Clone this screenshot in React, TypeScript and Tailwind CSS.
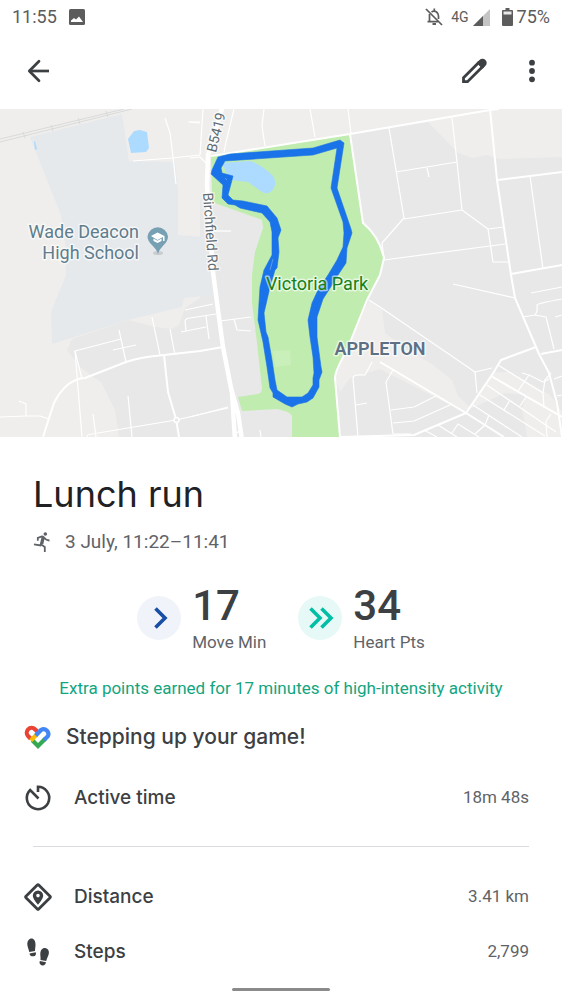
import type { ReactNode } from 'react';

const MINOR_ROADS = [
  'M165 118 170 133 173 157 176 184',
  'M133 161 172 158 200 155',
  'M188 122 200 123',
  'M190 122 200 122M190 158 200 157 207 164',
  'M203 109 200 155',
  'M234 109 226 142 224 152',
  'M264 109 262 126 265 146',
  'M310 109 315 137',
  'M348 109 351 134',
  'M210 231 231 231',
  'M82 437 75 351 121 339',
  'M75 351 82 379',
  'M119 330 126 362',
  'M113 350 136 345',
  'M152 317 160 355',
  'M170 329 175 355',
  'M185 310 213 304',
  'M186 331 185 321Q186 318 190 318L216 314',
  'M181 332 206 327M206 316 209 339',
  'M220 321 251 317M234 319 237 330 251 331',
  'M19 401 26 404 26 416',
  'M0 417 26 416 40 416 49 419',
  'M128 396 132 437',
  'M93 414 96 437',
  'M87 437Q87 434 92 434L176 420 228 408',
  'M190 417 228 407',
  'M237 433 239 431M261 437 260 430',
  'M389 128 404 218 382 243 384 259',
  'M452 118 457 162 462 210 404 219',
  'M396 172 457 162M427 168 429 177',
  'M462 210 488 229 493 262 509 262',
  'M488 229 504 227',
  'M384 260 505 244',
  'M530 176 543 269',
  'M369 300 380 307 475 372 492 368',
  'M475 372 477 393',
  'M453 284 515 298',
  'M531 293 562 287',
  'M523 317 535 315Q538 312 537 305Q539 303 562 299',
  'M535 315 546 317 554 349M555 317 562 315',
  'M372 362 365 375Q353 374 353 378L358 437M356 405 367 403',
  'M393 370 386 382 393 434 411 434',
  'M391 410 414 407 436 396',
  'M393 423 414 421 450 405',
  'M498 365 543 393 544 408',
  'M543 393 545 380 551 373',
  'M522 373 529 375 543 382 549 379',
  'M529 375 518 391M526 397 520 406',
  'M487 385 556 432',
  'M480 395 545 436M473 405 522 437',
  'M510 400 504 410M489 415 485 425 475 434',
  'M424 430 437 437M438 425 457 437M452 433 458 424 479 437',
  'M554 379 562 376M557 396 562 395',
  'M551 414 546 421 547 437',
];

const MAIN_ROADS = [
  'M43 437 50 415 54 403Q66 379 85 378L126 362Q140 357 164 355L200 351 223 347',
  'M164 355 168 392 176 419 179 437',
  'M211 156 350 134 490 110 499 109',
  'M350 134 363 223Q379 236 384 258L380 275 367 300 347 350Q335 371 335 378L340 437',
  'M490 109 497 180 511 275 515 298 539 354 549 373 557 403 562 437',
  'M498 180 562 172',
  'M511 274 562 265',
  'M536 347 501 360 492 375 466 413',
  'M541 354 562 350',
  'M380 362 466 413 504 437',
  'M466 413 414 435 340 437',
  'M491 376 562 417',
];

// Outer edge first, then the inner edge, filled with the even-odd rule.
const ROUTE =
  'M218 157 230 154 313 148 340 140 344 143 337 188 351 229 352 233 347 248 346 263 338 275 332 285 323 299 317 317 317 337 321 367 322 372 319 380 319 387 313 398 307 402 298 404 292 407 285 404 273 397 273 393 270 388 267 367 263 342 261 333 258 320 259 303 260 287 264 270 272 255 272 232 270 222 262 213 240 208 235 205 228 204 222 198 223 185 211 174 212 170Z' +
  'M225 161 313 155 337 148 331 188 343 222 344 233 343 247 337 260 328 275 318 290 312 303 308 320 310 337 313 357 314 373 313 378 313 385 308 393 302 397 287 397 277 390 275 380 272 360 268 337 266 332 264 313 270 287 275 270 277 268 279 252 278 238 281 230 277 218 267 206 243 201 233 200 228 195 232 180 233 176 222 173 221 168Z';

function RouteMap() {
  return (
    <svg viewBox="0 109 562 328" className="block w-full font-[Roboto,sans-serif]" role="img" aria-label="Route map">
      <rect y="109" width="562" height="328" fill="#efeeec" />
      <g fill="#e8e8e8">
        <path d="M67 350 72 339 128 320 155 327 172 329 179 325 185 308 200 298 200 200 212 195 300 240 300 437 119 437 115 410 101 382 92 376 80 367Z" />
        <path d="M350 134 428 122 458 153 472 158 487 155 500 159 562 157 562 437 330 437 350 250Z" />
      </g>
      <g fill="#efeeec">
        <path d="M369 300 382 309 385 333 408 350 432 364 452 380 458 396 470 407 464 412 380 369 350 378 340 392 335 378 345 352Z" />
        <path d="M492 372 510 372 550 395 562 412 562 437 527 437 522 408 527 395 505 393 470 409 478 393Z" />
      </g>
      <path
        d="M30 137 122 114 129 161 175 162 178 190 178 235 204 237 213 295 184 298 182 307 128 320 52 344 51 312 66 275 66 250 61 215Z"
        fill="#e5e9ec"
      />
      <g fill="#acdbff">
        <path d="M128 139 134 131 140 130 147 132 149 148 146 152 131 153Z" />
        <path d="M34 142 35 141 37 149 35 150Z" />
      </g>
      <path d="M0 139 124 109M0 142 132 109" fill="none" stroke="#d8dada" strokeWidth="1" />
      <path d="M23 132 25 138M51 125 53 131M78 118 80 124M106 111 108 117" stroke="#d8dada" />
      <path
        d="M211 155 350 134 363 223Q379 236 384 258L380 275 367 300 347 350Q335 371 335 378L340 437H292V417Q292 412 277 409L242 411 238 397 258 394Q262 393 262 388L257 343 252 303 252 275 255 252 263 228 262 220 212 202Z"
        fill="#c1ecaf"
      />
      <path d="M273 351 290 350 291 365 275 367Z" fill="#c9efba" />
      <path
        d="M222 163 250 161Q262 165 273 176Q277 182 274 188Q269 196 262 192L248 182 230 180Z"
        fill="#acdbff"
      />
      <g fill="none" stroke="#ffffff" strokeLinejoin="round">
        {MINOR_ROADS.map((d) => (
          <path key={d} d={d} strokeWidth="1.2" />
        ))}
        {MAIN_ROADS.map((d) => (
          <path key={d} d={d} strokeWidth="2" />
        ))}
        <path d="M223 105 208 155 207 185 213 272 218 310 223 347 232 393 235 440M231 388 238 413 242 440" strokeWidth="4.5" />
      </g>
      <circle cx="176.500" cy="420" r="2.500" fill="#e8e8e8" stroke="#ffffff" strokeWidth="1.500" />
      <path d={ROUTE} fill="#1a73e8" fillRule="evenodd" stroke="#1a73e8" strokeWidth=".6" />
      <path d="M225 178 227 180M273 259 270 270" stroke="#77aeea" strokeWidth=".7" />
      <g stroke="#ffffff" strokeOpacity=".6" strokeWidth="3" strokeLinejoin="round" paintOrder="stroke">
        <g fill="#5f7d8c" fontSize="18" textAnchor="end">
          <text x="139" y="238">Wade Deacon</text>
          <text x="139" y="259">High School</text>
        </g>
        <text x="317" y="290" fill="#188018" fontSize="18" textAnchor="middle">
          Victoria Park
        </text>
        <text x="380" y="355" fill="#5d7084" fontSize="18" fontWeight="600" textAnchor="middle">
          APPLETON
        </text>
        <text fill="#5f6b73" fontSize="14" transform="translate(216 153) rotate(-76)">
          B5419
        </text>
        <text fill="#5f6b73" fontSize="14" transform="translate(203 193) rotate(86)">
          Birchfield Rd
        </text>
      </g>
      <ellipse cx="158" cy="253" rx="5" ry="2" fill="#c9cdd0" />
      <path d="M158 254C156 246 147.500 244 147.500 236.500A10.300 10.300 0 0 1 168 236.500C168 244 160 246 158 254Z" fill="#78a0b3" />
      <path d="M151 236 157.500 232.500 164.500 236V241H163V237L157.500 240Z" fill="#ffffff" />
      <path d="M153.500 238.500 157.500 240.700 161.500 238.500V241L157.500 243 153.500 241Z" fill="#ffffff" />
    </svg>
  );
}

function StatusBar() {
  return (
    <div className="flex h-[34px] items-center justify-between px-3 text-lg text-[#5c5c5c]">
      <div className="flex items-center gap-3">
        <span>11:55</span>
        <svg viewBox="0 0 16 16" className="size-4" aria-hidden="true">
          <rect width="16" height="16" rx="1.500" fill="#5c5c5c" />
          <path d="M2 13V11.500L5 9 7 10.500 10 7.500 14 13Z" fill="#ffffff" />
        </svg>
      </div>
      <div className="flex items-center">
        <svg viewBox="0 0 18 18" className="mr-2 size-[18px]" fill="none" stroke="#5c5c5c" strokeWidth="1.700" aria-hidden="true">
          <path d="M1 1 17 17" />
          <path d="M4.500 6V13.500M2.500 13.700H13M6.500 4Q9 2.300 11.500 4Q13.500 5.500 13.500 8V11M9.300 .5V3" />
          <path d="M7.500 16H11" strokeWidth="2" />
        </svg>
        <span className="mr-1 text-sm">4G</span>
        <svg viewBox="0 0 17 17" className="mr-3 size-[17px]" aria-hidden="true">
          <path d="M0 17 17 0V17Z" fill="#c4c4c4" />
          <path d="M0 17 10 7V17Z" fill="#5c5c5c" />
        </svg>
        <svg viewBox="0 0 11 18" className="mr-1 h-[18px] w-[11px]" aria-hidden="true">
          <path d="M3.500 0H7.500V2H10A1 1 0 0 1 11 3V17A1 1 0 0 1 10 18H1A1 1 0 0 1 0 17V3A1 1 0 0 1 1 2H3.500Z" fill="#5c5c5c" />
          <path d="M1.500 3.500H9.500V6.500H1.500Z" fill="#e8e8e8" />
        </svg>
        <span>75%</span>
      </div>
    </div>
  );
}

function AppBar() {
  return (
    <header className="flex h-[75px] items-center justify-between px-[26px] pb-[2px]">
      <button type="button" aria-label="Back">
        <svg viewBox="0 0 24 24" className="size-6" fill="none" stroke="#3c4043" strokeWidth="2.700" strokeLinecap="round">
          <path d="M13 2.300 3.300 12 13 21.700" strokeLinejoin="round" />
          <path d="M4 12H23" strokeLinecap="butt" />
        </svg>
      </button>
      <div className="flex items-center gap-[41px]">
        <button type="button" aria-label="Edit">
          <svg viewBox="0 0 26 26" className="size-[26px]">
            <path
              d="M2.500 19.700 17.500 4.700 21.500 8.700 6.500 23.700H2.500Z"
              fill="none"
              stroke="#3c4043"
              strokeWidth="2.800"
            />
            <path d="M16 4.500 18.500 2A4 4 0 0 1 24.500 7.800L21.500 10.700 15.800 5Z" fill="#3c4043" />
          </svg>
        </button>
        <button type="button" aria-label="More options">
          <svg viewBox="0 0 8 24" className="h-6 w-2" fill="#3c4043">
            <circle cx="4" cy="3.700" r="2.900" />
            <circle cx="4" cy="12" r="2.900" />
            <circle cx="4" cy="20.300" r="2.900" />
          </svg>
        </button>
      </div>
    </header>
  );
}

function RunIcon() {
  return (
    <svg viewBox="0 0 18 20" className="h-5 w-[18px]" fill="none" stroke="#5f6368" strokeWidth="1.800" aria-hidden="true">
      <circle cx="12.300" cy="2" r="1.800" fill="#5f6368" stroke="none" />
      <path d="M4.800 8.700V5.900L9 4.300Q10.300 4.200 11 5.400Q12.800 8.300 16.500 8.500" />
      <path d="M10 4.800 7.800 12.200 11.800 15V20M9.500 5 7.500 13.500 1 12.300" />
      <path d="M10.500 5.500 9 12" strokeWidth="2.600" />
    </svg>
  );
}

function HeartLogo() {
  return (
    <svg viewBox="0 0 28 24" className="h-6 w-7" fill="none" strokeWidth="4.200" aria-hidden="true">
      <path d="M8.300 15.300 14 21 21.500 13.500" stroke="#34a853" />
      <path d="M5.800 12.800 4.200 11.200A4.800 4.800 0 0 1 11 4.300L14.500 7.800" stroke="#ea4335" />
      <path d="M5.200 12.200 6.700 13.700" stroke="#ea4335" />
      <path d="M6.800 15.400 12.200 10" stroke="#fbbc04" />
      <path d="M11.700 10.500 17 5A4.800 4.800 0 0 1 23.800 11.300L20 15" stroke="#4285f4" />
    </svg>
  );
}

function TimerIcon() {
  return (
    <svg viewBox="0 0 28 28" className="size-7" fill="none" stroke="#3c4043" strokeWidth="2.600" aria-hidden="true">
      <path d="M14 8V2.800A11.200 11.200 0 1 1 6.200 6L14.500 14.500" />
    </svg>
  );
}

function DistanceIcon() {
  return (
    <svg viewBox="0 0 28 28" className="size-7" aria-hidden="true">
      <rect x="5" y="5" width="18" height="18" rx="1" transform="rotate(45 14 14)" fill="none" stroke="#3c4043" strokeWidth="2.800" />
      <path
        d="M14 7.500A5.200 5.200 0 0 1 19.200 12.700C19.200 16 14 21.700 14 21.700S8.800 16 8.800 12.700A5.200 5.200 0 0 1 14 7.500ZM14 10.800A1.800 1.800 0 1 0 14 14.400A1.800 1.800 0 1 0 14 10.800Z"
        fill="#3c4043"
        fillRule="evenodd"
      />
    </svg>
  );
}

function StepsIcon() {
  return (
    <svg viewBox="0 0 28 28" className="size-7" fill="#3c4043" aria-hidden="true">
      <path d="M7.500 .5C10 .5 11.500 3 11.500 6.500C11.500 9 11 10.500 11 13L5.300 14C4.800 11 3.300 9 3.300 6C3.300 3 5 .5 7.500 .5Z" />
      <path d="M5.500 15.400 11.700 14.200C12.600 16 11.500 18.200 9.500 18.300C7.300 18.500 5.700 17.500 5.500 15.400Z" />
      <path d="M21 10C18.500 9.700 16.500 12 16.300 15.500C16.200 18 16.800 19.500 16.500 22L22.200 23C22.700 20 24.700 18 24.900 15C25.100 12.300 23.500 10.200 21 10Z" />
      <path d="M22 24.300 15.800 23.100C15 25 16 27 18 27.400C20.200 27.800 21.700 26.500 22 24.300Z" />
    </svg>
  );
}

type ScoreProps = { value: string; label: string; badge: ReactNode };

function Score({ value, label, badge }: ScoreProps) {
  return (
    <div className="flex items-center gap-[11px]">
      {badge}
      <div>
        <p className="text-[42px] leading-11 font-medium text-[#3c4043]">{value}</p>
        <p className="mt-1 text-[17px] leading-5 text-[#5f6368]">{label}</p>
      </div>
    </div>
  );
}

type MetricProps = { icon: ReactNode; label: string; value: string };

function Metric({ icon, label, value }: MetricProps) {
  return (
    <div className="flex h-10 items-center pr-[33px] pl-6">
      {icon}
      <dt className="ml-[22px] font-[Inter,sans-serif] text-[19px] font-medium text-[#3c4043]">{label}</dt>
      <dd className="ml-auto text-[17px] text-[#5f6368]">{value}</dd>
    </div>
  );
}

export default function App() {
  return (
    <div className="min-h-screen bg-white font-[Roboto,sans-serif]">
      <StatusBar />
      <AppBar />
      <main>
        <RouteMap />
        <div className="px-[33px] pt-[33px]">
          <h1 className="font-[Inter,sans-serif] text-4xl leading-12 text-[#202124]">Lunch run</h1>
          <div className="mt-3 flex items-center gap-[14px] text-[19px] leading-6 text-[#5f6368]">
            <RunIcon />
            <span>3 July, 11:22–11:41</span>
          </div>
        </div>
        <div className="mt-[30px] flex justify-center gap-8">
          <Score
            value="17"
            label="Move Min"
            badge={
              <svg viewBox="0 0 44 44" className="size-11" fill="none" aria-hidden="true">
                <circle cx="22" cy="22" r="22" fill="#f0f3f9" />
                <path d="M18.500 12.500 28 22 18.500 31.500" stroke="#174ea6" strokeWidth="3.600" />
              </svg>
            }
          />
          <Score
            value="34"
            label="Heart Pts"
            badge={
              <svg viewBox="0 0 44 44" className="size-11" fill="none" aria-hidden="true">
                <circle cx="22" cy="22" r="22" fill="#e6f9f6" />
                <path d="M12.500 12.500 22 22 12.500 31.500M23.500 12.500 33 22 23.500 31.500" stroke="#00bfa5" strokeWidth="3.600" />
              </svg>
            }
          />
        </div>
        <p className="mt-6 text-center text-[17px] leading-6 text-[#12a580]">
          Extra points earned for 17 minutes of high-intensity activity
        </p>
        <div className="mt-[21px] flex items-center gap-[14px] pl-6">
          <HeartLogo />
          <h2 className="font-[Inter,sans-serif] text-[21px] leading-8 font-medium text-[#3c4043]">Stepping up your game!</h2>
        </div>
        <dl className="mt-[25px]">
          <Metric icon={<TimerIcon />} label="Active time" value="18m 48s" />
        </dl>
        <hr className="mx-[33px] mt-[28px] border-[#dadce0]" />
        <dl className="mt-[30px] flex flex-col gap-[15px]">
          <Metric icon={<DistanceIcon />} label="Distance" value="3.41 km" />
          <Metric icon={<StepsIcon />} label="Steps" value="2,799" />
        </dl>
      </main>
      <div className="mx-auto mt-4 h-[3px] w-[98px] rounded-full bg-[#8a8a8a]" />
    </div>
  );
}
